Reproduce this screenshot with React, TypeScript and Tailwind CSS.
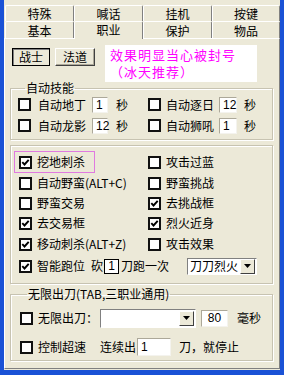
import React from 'react'

const cjk = "font-['Noto_Sans_CJK_SC','Noto_Sans_CJK_JP',sans-serif]"
const num = "font-['Liberation_Sans','DejaVu_Sans',sans-serif]"

function Check({ on }: { on?: boolean }) {
  return (
    <span className="flex h-[13px] w-[13px] shrink-0 items-center justify-center border-2 border-[#111] bg-white">
      {on && (
        <svg width="9" height="9" viewBox="0 0 9 9">
          <path d="M1.3 4.2 L3.5 6.5 L7.7 1.8" fill="none" stroke="#000" strokeWidth="1.9" />
        </svg>
      )}
    </span>
  )
}

function Field({ value, w, h = 16, center, boxed }: { value: string; w: number; h?: number; center?: boolean; boxed?: boolean }) {
  return (
    <span
      className={`flex shrink-0 items-center bg-white text-[12px] leading-[12px] text-black ${num} ${center ? 'justify-center' : 'pl-[3px]'} ${
        boxed ? 'border border-black' : 'border border-t-[#aca899] border-l-[#aca899] border-r-[#f4f3ee] border-b-[#f4f3ee]'
      }`}
      style={{ width: w, height: h }}
    >
      {value}
    </span>
  )
}

function DropBtn() {
  return (
    <span className="flex h-[15px] w-[15px] shrink-0 items-center justify-center border border-t-white border-l-white border-r-[#404040] border-b-[#404040] bg-[#ece9d8]">
      <svg width="7" height="4" viewBox="0 0 7 4">
        <path d="M0 0 H7 L3.5 4 Z" fill="#000" />
      </svg>
    </span>
  )
}

function Tab({ label, active, top, w = 69 }: { label: string; active?: boolean; top?: boolean; w?: number }) {
  let cls = ''
  if (active) cls = 'relative z-10 -mb-[1px] h-[18px] bg-[#ece9d8] pt-[1px]'
  else if (top) cls = 'h-[16px] pt-[1px]'
  else cls = 'h-[17px] pt-[2px]'
  return (
    <div
      className={`flex shrink-0 justify-center rounded-t-[2px] border-t border-l border-r border-t-white border-l-white border-r-[#808080] text-[12px] leading-[14px] ${cls}`}
      style={{ width: w }}
    >
      {label}
    </div>
  )
}

function Item({ on, label }: { on?: boolean; label: string }) {
  return (
    <div className="flex items-center">
      <Check on={on} />
      <span className="ml-[5px] whitespace-nowrap">{label}</span>
    </div>
  )
}

export default function App() {
  return (
    <div className={`h-[375px] w-[284px] overflow-hidden bg-[#1a52d6] pb-[5px] pl-[4px] pr-[4px] text-[12px] text-black ${cjk}`}>
      <div className="flex h-full flex-col bg-[#ece9d8] pb-[1px]">
        {/* tabs */}
        <div className="ml-[1px] mt-[5px] flex">
          <Tab label="特殊" top />
          <Tab label="喊话" top />
          <Tab label="挂机" top />
          <Tab label="按键" top w={68} />
        </div>
        <div className="ml-[1px] flex">
          <Tab label="基本" />
          <Tab label="职业" active />
          <Tab label="保护" />
          <Tab label="物品" w={68} />
        </div>

        <div className="flex-1 border-t border-l border-r border-b border-t-white border-l-white border-r-[#808080] border-b-[#808080]">
          {/* class buttons + notice */}
          <div className="mt-[6px] flex items-start pl-[7px]">
            <div className="mt-[3px] flex h-[18px] w-[38px] items-center justify-center border border-black bg-[#ece9d8] leading-[12px] shadow-[inset_1px_1px_0_#808080]">
              战士
            </div>
            <div className="ml-[5px] mt-[3px] flex h-[18px] w-[40px] items-center justify-center border border-t-white border-l-white border-r-[#404040] border-b-[#404040] bg-[#ece9d8] leading-[12px] shadow-[inset_-1px_-1px_0_#aca899]">
              法道
            </div>
            <div className="ml-[10px] h-[37px] w-[152px] bg-white pl-[5px] pt-[1px] text-[13px] leading-[17px] tracking-[1px] text-[#ff00ff]">
              <div className="whitespace-nowrap">效果明显当心被封号</div>
              <div className="whitespace-nowrap">（冰天推荐）</div>
            </div>
          </div>

          {/* 自动技能 */}
          <fieldset className="ml-[5px] w-[263px] border border-[#c7c3b1] shadow-[inset_1px_1px_0_#fff,1px_1px_0_#fff] pb-[3px] pl-[7px]">
            <legend className="ml-[7px] px-[1px] leading-[12px]">自动技能</legend>
            <div className="flex h-[21px] items-center">
              <div className="flex w-[130px] items-center">
                <Check />
                <span className="ml-[7px] w-[50px] whitespace-nowrap">自动地丁</span>
                <span className="ml-[4px]"><Field value="1" w={16} /></span>
                <span className="ml-[8px]">秒</span>
              </div>
              <div className="flex items-center">
                <Check />
                <span className="ml-[5px] w-[49px] whitespace-nowrap">自动逐日</span>
                <span className="ml-[4px]"><Field value="12" w={18} /></span>
                <span className="ml-[7px]">秒</span>
              </div>
            </div>
            <div className="flex h-[21px] items-center">
              <div className="flex w-[130px] items-center">
                <Check />
                <span className="ml-[7px] w-[50px] whitespace-nowrap">自动龙影</span>
                <span className="ml-[4px]"><Field value="12" w={16} /></span>
                <span className="ml-[8px]">秒</span>
              </div>
              <div className="flex items-center">
                <Check />
                <span className="ml-[5px] w-[49px] whitespace-nowrap">自动狮吼</span>
                <span className="ml-[4px]"><Field value="1" w={18} /></span>
                <span className="ml-[7px]">秒</span>
              </div>
            </div>
          </fieldset>

          {/* 职业选项 */}
          <div className="ml-[5px] mt-[5px] w-[263px] border border-[#c7c3b1] pb-[6px] pt-[5px] shadow-[inset_1px_1px_0_#fff,1px_1px_0_#fff]">
            <div className="flex h-[22px] items-center">
              <div className="w-[137px]">
                <div className="ml-[3px] flex h-[22px] w-[81px] items-center border border-[#e07ae0] pl-[4px]">
                  <Item on label="挖地刺杀" />
                </div>
              </div>
              <Item label="攻击过蓝" />
            </div>
            <div className="flex h-[20px] items-center pl-[8px]">
              <div className="w-[129px]"><Item label="自动野蛮(ALT+C)" /></div>
              <Item label="野蛮挑战" />
            </div>
            <div className="flex h-[20px] items-center pl-[8px]">
              <div className="w-[129px]"><Item label="野蛮交易" /></div>
              <Item on label="去挑战框" />
            </div>
            <div className="flex h-[20px] items-center pl-[8px]">
              <div className="w-[129px]"><Item on label="去交易框" /></div>
              <Item on label="烈火近身" />
            </div>
            <div className="flex h-[22px] items-center pl-[8px]">
              <div className="w-[129px]"><Item on label="移动刺杀(ALT+Z)" /></div>
              <Item label="攻击效果" />
            </div>
            <div className="flex h-[22px] items-center pl-[8px]">
              <Item on label="智能跑位" />
              <span className="ml-[6px]">砍</span>
              <span className="ml-[1px]"><Field value="1" w={15} h={15} center boxed /></span>
              <span className="ml-[2px] whitespace-nowrap">刀跑一次</span>
              <div className="ml-[18px] flex h-[17px] w-[70px] items-center justify-between border border-t-[#808080] border-l-[#808080] border-r-white border-b-white bg-white pl-[2px] pr-[1px]">
                <span className="whitespace-nowrap leading-[12px]">刀刀烈火</span>
                <DropBtn />
              </div>
            </div>
          </div>

          {/* 无限出刀 */}
          <fieldset className="ml-[5px] mt-[4px] w-[263px] border border-[#c7c3b1] pb-[2px] pl-[9px] pt-[7px] shadow-[inset_1px_1px_0_#fff,1px_1px_0_#fff]">
            <legend className="ml-[7px] px-[1px] leading-[12px]">无限出刀(TAB,三职业通用)</legend>
            <div className="flex h-[22px] items-center">
              <Check />
              <span className="ml-[5px] w-[62px] whitespace-nowrap">无限出刀：</span>
              <div className="flex h-[19px] w-[96px] items-center justify-end border border-t-[#808080] border-l-[#808080] border-r-white border-b-white bg-white pr-[1px]">
                <DropBtn />
              </div>
              <span className="ml-[5px]"><Field value="80" w={27} h={17} center /></span>
              <span className="ml-[9px]">毫秒</span>
            </div>
            <div className="mt-[7px] flex h-[22px] items-center">
              <Check />
              <span className="ml-[5px] w-[62px] whitespace-nowrap">控制超速</span>
              <span className="whitespace-nowrap">连续出</span>
              <span className="ml-[1px]"><Field value="1" w={34} h={18} /></span>
              <span className="ml-[8px] whitespace-nowrap">刀，就停止</span>
            </div>
          </fieldset>
        </div>
      </div>
    </div>
  )
}
